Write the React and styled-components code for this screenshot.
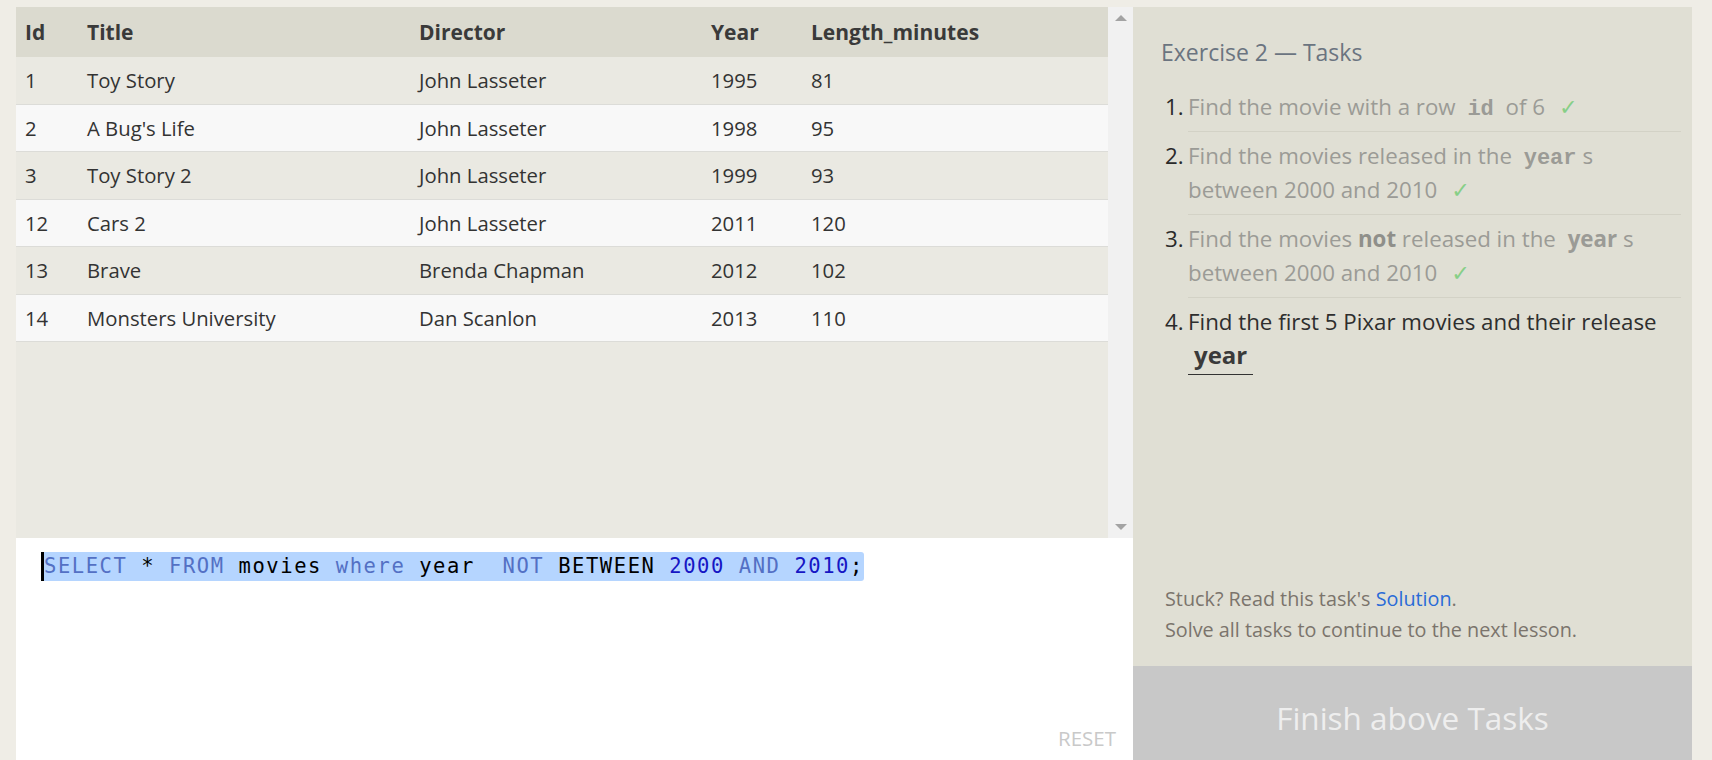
import React from "react";
import styled, { createGlobalStyle } from "styled-components";

const GlobalStyle = createGlobalStyle`
  html, body {
    margin: 0;
    padding: 0;
    background: #efede6;
  }
  * {
    box-sizing: border-box;
  }
`;

const Page = styled.div`
  display: flex;
  height: 760px;
  padding: 7px 20px 0 16px;
  overflow: hidden;
  font-family: "Open Sans", "Noto Sans", sans-serif;
`;

const LeftColumn = styled.div`
  width: 1117px;
  display: flex;
  flex-direction: column;
`;

const TableArea = styled.div`
  height: 531px;
  display: flex;
  background: #eae9e2;
`;

const TableBody = styled.div`
  flex: 1;
`;

const Row = styled.div`
  display: grid;
  grid-template-columns: 62px 332px 292px 100px 1fr;
  align-items: center;
  height: ${props => (props.head ? "50px" : "47.5px")};
  background: ${props =>
    props.head ? "#dbdacf" : props.odd ? "#eae9e2" : "#f8f8f8"};
  border-bottom: ${props => (props.head ? "none" : "1px solid #dcdcd8")};
  color: ${props => (props.head ? "#3a3a3a" : "#333")};
  font-size: ${props => (props.head ? "21px" : "20.3px")};
  font-weight: ${props => (props.head ? 700 : 400)};
`;

const Cell = styled.div`
  padding-left: 9px;
  white-space: nowrap;
`;

const Scrollbar = styled.div`
  width: 25px;
  background: #f1f1f1;
  display: flex;
  flex-direction: column;
  justify-content: space-between;
  align-items: center;
  padding: 8px 0 8px;
`;

const Arrow = styled.div`
  width: 0;
  height: 0;
  border-left: 6px solid transparent;
  border-right: 6px solid transparent;
  border-bottom: ${props => (props.down ? "none" : "6px solid #a3a3a3")};
  border-top: ${props => (props.down ? "6px solid #a3a3a3" : "none")};
`;

const Editor = styled.div`
  flex: 1;
  background: #fff;
  display: flex;
  flex-direction: column;
  padding: 14px 17px 8px 25px;
`;

const CodeLine = styled.div`
  display: flex;
  align-items: center;
  font-family: "DejaVu Sans Mono", monospace;
  font-size: 20.5px;
  letter-spacing: 1.55px;
  white-space: pre;
  height: 29px;
`;

const Caret = styled.span`
  display: inline-block;
  width: 3px;
  height: 29px;
  background: #000;
`;

const Selection = styled.span`
  display: inline-block;
  line-height: 29px;
  height: 29px;
  background: #b5d5ff;
  border-radius: 0 3px 3px 0;
  color: #000;
`;

const Token = styled.span`
  color: ${props =>
    props.kind === "kw" ? "#5370c4" : props.kind === "num" ? "#1616c4" : "#000"};
`;

const ResetButton = styled.div`
  margin-top: auto;
  align-self: flex-end;
  color: #c9c9c9;
  font-size: 20.5px;
`;

const RightColumn = styled.div`
  width: 559px;
  display: flex;
  flex-direction: column;
`;

const TaskPanel = styled.div`
  flex: 1;
  background: #e0dfd4;
  padding: 30px 11px 21px 28px;
  display: flex;
  flex-direction: column;
`;

const TaskTitle = styled.h2`
  margin: 0 0 16px;
  font-size: 23px;
  font-weight: 400;
  line-height: 30px;
  color: #6b7480;
`;

const TaskList = styled.ol`
  list-style: none;
  margin: 0;
  padding: 0 0 0 4px;
`;

const TaskItem = styled.li`
  display: flex;
  line-height: 34px;
  font-size: 22.3px;
`;

const Marker = styled.span`
  flex: 0 0 23px;
  padding-top: 7px;
  color: #2a2a2a;
`;

const TaskText = styled.div`
  flex: 1;
  padding: 7px 0;
  border-bottom: ${props => (props.last ? "none" : "1px solid #d3d2c6")};
  color: ${props => (props.done ? "#9b9b96" : "#2e2e2e")};
`;

const Code = styled.code`
  font-family: ${props =>
    props.mono ? '"Liberation Mono", monospace' : '"Open Sans", sans-serif'};
  font-weight: 700;
  font-size: ${props => (props.mono ? "22px" : props.dark ? "24px" : "22.3px")};
  line-height: 1;
  padding: 0 6px 3px;
  border-bottom: ${props => (props.underline ? "1.5px solid #333" : "none")};
  color: ${props => (props.dark ? "#3a3a3a" : "#9b9b96")};
`;

const Strong = styled.b`
  color: #8f8f8a;
`;

const Check = styled.span`
  color: #87cf87;
  font-family: "DejaVu Sans", sans-serif;
  line-height: 1;
  margin-left: 14px;
`;

const Footer = styled.div`
  margin-top: auto;
  font-size: 19.8px;
  line-height: 31px;
  color: #7b746c;
  padding-left: 4px;
`;

const Link = styled.a`
  color: #2a6bd7;
  text-decoration: none;
`;

const FinishButton = styled.div`
  height: 94px;
  background: #c8c8c8;
  display: flex;
  align-items: center;
  justify-content: center;
  padding-top: 8px;
  color: #eeeeee;
  font-size: 31.5px;
`;

const movies = [
  [1, "Toy Story", "John Lasseter", 1995, 81],
  [2, "A Bug's Life", "John Lasseter", 1998, 95],
  [3, "Toy Story 2", "John Lasseter", 1999, 93],
  [12, "Cars 2", "John Lasseter", 2011, 120],
  [13, "Brave", "Brenda Chapman", 2012, 102],
  [14, "Monsters University", "Dan Scanlon", 2013, 110]
];

const columns = ["Id", "Title", "Director", "Year", "Length_minutes"];

const App = () => {
  return (
    <Page>
      <GlobalStyle />
      <LeftColumn>
        <TableArea>
          <TableBody>
            <Row head>
              {columns.map(c => (
                <Cell key={c}>{c}</Cell>
              ))}
            </Row>
            {movies.map((m, i) => (
              <Row key={m[0]} odd={i % 2 === 0}>
                {m.map((v, j) => (
                  <Cell key={j}>{v}</Cell>
                ))}
              </Row>
            ))}
          </TableBody>
          <Scrollbar>
            <Arrow />
            <Arrow down />
          </Scrollbar>
        </TableArea>
        <Editor>
          <CodeLine>
            <Caret />
            <Selection>
              <Token kind="kw">SELECT</Token> <Token>*</Token>{" "}
              <Token kind="kw">FROM</Token> <Token>movies</Token>{" "}
              <Token kind="kw">where</Token> <Token>year</Token>{"  "}
              <Token kind="kw">NOT</Token> <Token>BETWEEN</Token>{" "}
              <Token kind="num">2000</Token> <Token kind="kw">AND</Token>{" "}
              <Token kind="num">2010</Token>
              <Token>;</Token>
            </Selection>
          </CodeLine>
          <ResetButton>RESET</ResetButton>
        </Editor>
      </LeftColumn>
      <RightColumn>
        <TaskPanel>
          <TaskTitle>Exercise 2 — Tasks</TaskTitle>
          <TaskList>
            <TaskItem>
              <Marker>1.</Marker>
              <TaskText done>
                Find the movie with a row <Code mono>id</Code> of 6
                <Check>✓</Check>
              </TaskText>
            </TaskItem>
            <TaskItem>
              <Marker>2.</Marker>
              <TaskText done>
                Find the movies released in the <Code mono>year</Code>s
                <br />
                between 2000 and 2010
                <Check>✓</Check>
              </TaskText>
            </TaskItem>
            <TaskItem>
              <Marker>3.</Marker>
              <TaskText done>
                Find the movies <Strong>not</Strong> released in the{" "}
                <Code>year</Code>s
                <br />
                between 2000 and 2010
                <Check>✓</Check>
              </TaskText>
            </TaskItem>
            <TaskItem>
              <Marker>4.</Marker>
              <TaskText last>
                Find the first 5 Pixar movies and their release
                <br />
                <Code dark underline>
                  year
                </Code>
              </TaskText>
            </TaskItem>
          </TaskList>
          <Footer>
            Stuck? Read this task's <Link href="#">Solution</Link>.
            <br />
            Solve all tasks to continue to the next lesson.
          </Footer>
        </TaskPanel>
        <FinishButton>Finish above Tasks</FinishButton>
      </RightColumn>
    </Page>
  );
};

export default App;
